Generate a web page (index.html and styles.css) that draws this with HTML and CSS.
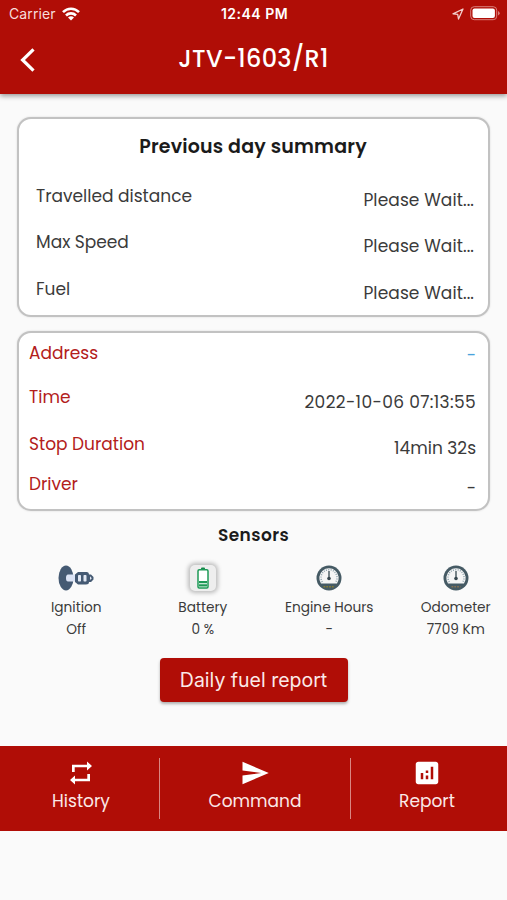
FILE: index.html
```
<!DOCTYPE html>
<html lang="en">
<head>
    <meta charset="UTF-8">
    <meta name="viewport" content="width=device-width, initial-scale=1.0">
    <title>JTV-1603/R1</title>
    <link rel="stylesheet" href="styles.css">
</head>
<body>
    <!-- Status bar and title -->
    <header class="header">
        <div class="status-bar">
            <div class="carrier">
                <span>Carrier</span>
                <svg class="wifi" viewBox="0 0 18 14" width="18" height="14" fill="none" stroke="#fff" stroke-width="2.6">
                    <path d="M1 5.2C5.5.6 12.5.6 17 5.2"/>
                    <path d="M4 8.5C6.8 5.7 11.2 5.7 14 8.5"/>
                    <path d="M6 10.5Q9 8 12 10.5L9 13.5Z" fill="#fff" stroke="none"/>
                </svg>
            </div>
            <div class="clock">12:44 PM</div>
            <div class="indicators">
                <svg viewBox="0 0 12 12" width="12" height="12" fill="none" stroke="#f3cfcd" stroke-width="1.3" stroke-linejoin="round">
                    <path d="M11 1L1 5.8L5.7 6.3L6.5 11Z"/>
                </svg>
                <svg viewBox="0 0 30 15" width="30" height="15">
                    <rect x="0.7" y="0.7" width="26" height="13" rx="3.5" fill="none" stroke="#d97f7b"/>
                    <rect x="2.5" y="2.5" width="22.4" height="9.4" rx="2" fill="#fff"/>
                    <path d="M28 5V9.5Q29.7 8.5 29.7 7.2T28 5Z" fill="#d97f7b"/>
                </svg>
            </div>
        </div>
        <div class="title-bar">
            <svg class="back" viewBox="0 0 15 24" width="15" height="24" fill="none" stroke="#fff" stroke-width="3.2">
                <path d="M13.5 1.3L2.6 12L13.5 22.7"/>
            </svg>
            <h1 class="title">JTV-1603/R1</h1>
        </div>
    </header>

    <main class="content">
        <!-- Previous day summary -->
        <section class="card summary">
            <h2 class="summary-title">Previous day summary</h2>
            <div class="row"><span>Travelled distance</span><span class="value">Please Wait...</span></div>
            <div class="row"><span>Max Speed</span><span class="value">Please Wait...</span></div>
            <div class="row"><span>Fuel</span><span class="value">Please Wait...</span></div>
        </section>

        <!-- Vehicle details -->
        <section class="card details">
            <div class="row address"><span class="label">Address</span><span class="link">-</span></div>
            <div class="row time"><span class="label">Time</span><span class="value date">2022-10-06 07:13:55</span></div>
            <div class="row stop"><span class="label">Stop Duration</span><span class="value">14min 32s</span></div>
            <div class="row driver"><span class="label">Driver</span><span class="value">-</span></div>
        </section>

        <!-- Sensors -->
        <h2 class="sensors-title">Sensors</h2>
        <div class="sensors">
            <div class="sensor">
                <svg viewBox="0 0 36 26" width="36" height="26">
                    <ellipse cx="8" cy="13" rx="7.5" ry="12.5" fill="#455a73"/>
                    <path d="M10 9.5H17V16.5H10Q8 16.5 8 13T10 9.5Z" fill="#dbe3f5"/>
                    <path d="M17 9.5L20 7H29Q31 7 31 9.5H33L35.5 12V14.5L33 17H31Q31 19.5 28 19.5H20L17 17Z" fill="#455a73"/>
                    <rect x="20" y="10" width="3" height="6.5" rx="0.7" fill="#e2e8f3"/>
                    <rect x="25.5" y="10" width="3" height="6.5" rx="0.7" fill="#e2e8f3"/>
                    <path d="M32 11.3L33.8 13.2L32 15Z" fill="#e2e8f3"/>
                </svg>
                <span class="name">Ignition</span>
                <span class="reading">Off</span>
            </div>
            <div class="sensor">
                <div class="battery">
                    <svg viewBox="0 0 12 22" width="12" height="22">
                        <rect x="4" y="0.5" width="4" height="2.5" rx="1" fill="#17874a"/>
                        <rect x="1" y="2.7" width="10" height="18.3" rx="1.2" fill="#fff" stroke="#1e9a57" stroke-width="1.5"/>
                        <path d="M2 14H10V16.3H2ZM2 17.2H10V19.5H2Z" fill="#1e9a57"/>
                    </svg>
                </div>
                <span class="name">Battery</span>
                <span class="reading">0 %</span>
            </div>
            <div class="sensor">
                <svg viewBox="0 0 26 26" width="26" height="26">
                    <circle cx="13" cy="13" r="12.5" fill="#455a64"/>
                    <path d="M5 18.5A9.7 9.7 0 1 1 21 18.5Z" fill="#f5f5f5"/>
                    <path d="M6.3 17A8 8 0 1 1 19.7 17" fill="none" stroke="#90a4ae" stroke-width="1.5" stroke-dasharray="1 1.3"/>
                    <path d="M13 6V13" stroke="#37474f" stroke-width="1.3"/>
                    <circle cx="13" cy="13.5" r="1.8" fill="#37474f"/>
                    <path d="M7.5 21.7H18.5" stroke="#847b35" stroke-width="1.6" stroke-dasharray="1.8 1"/>
                </svg>
                <span class="name">Engine Hours</span>
                <span class="reading">-</span>
            </div>
            <div class="sensor">
                <svg viewBox="0 0 26 26" width="26" height="26">
                    <circle cx="13" cy="13" r="12.5" fill="#455a64"/>
                    <path d="M5 18.5A9.7 9.7 0 1 1 21 18.5Z" fill="#f5f5f5"/>
                    <path d="M6.3 17A8 8 0 1 1 19.7 17" fill="none" stroke="#90a4ae" stroke-width="1.5" stroke-dasharray="1 1.3"/>
                    <path d="M13 6V13" stroke="#37474f" stroke-width="1.3"/>
                    <circle cx="13" cy="13.5" r="1.8" fill="#37474f"/>
                    <path d="M8.5 21.7H17.5" stroke="#847052" stroke-width="1.6" stroke-dasharray="1.8 1"/>
                </svg>
                <span class="name">Odometer</span>
                <span class="reading">7709 Km</span>
            </div>
        </div>

        <button class="fuel-btn">Daily fuel report</button>
    </main>

    <!-- Bottom navigation -->
    <nav class="nav">
        <a class="nav-item history">
            <svg viewBox="0 0 22 24" width="22" height="24" fill="#fff"><path d="M2 3.7H17V.5L22 5l-5 4.500V6.300H4.700V11H2zM20 20.300H5v3.200L0 19l5-4.500v3.200H17.300V13H20z"/></svg>
            <span>History</span>
        </a>
        <a class="nav-item command">
            <svg viewBox="0 0 24 24" width="30" height="30" fill="#fff"><path d="M2.01 21L23 12 2.01 3 2 10l15 2-15 2z"/></svg>
            <span>Command</span>
        </a>
        <a class="nav-item report">
            <svg viewBox="0 0 24 24" width="30" height="30" fill="#fff"><path d="M19 3H5c-1.1 0-2 .9-2 2v14c0 1.1.9 2 2 2h14c1.1 0 2-.9 2-2V5c0-1.1-.9-2-2-2zM9 17H7v-5h2v5zm4 0h-2v-3h2v3zm0-5h-2v-2h2v2zm4 5h-2V7h2v10z"/></svg>
            <span>Report</span>
        </a>
    </nav>
</body>
</html>
```
FILE: styles.css
```
* {
    box-sizing: border-box;
}
body {
    margin: 0;
    height: 900px;
    display: flex;
    flex-direction: column;
    overflow: hidden;
    background-color: #fafafa;
    color: #3b3b3b;
    font-family: Poppins, Inter, "Open Sans", sans-serif;
    font-size: 17px;
}
h1, h2 {
    margin: 0;
}
.header {
    flex: none;
    height: 94px;
    background-color: #b00d06;
    color: white;
    box-shadow: 0 2px 5px rgba(0, 0, 0, 0.4);
}
.status-bar {
    height: 27px;
    padding: 0 7px 0 9px;
    display: grid;
    grid-template-columns: 1fr auto 1fr;
    align-items: center;
    font-family: Inter, sans-serif;
    font-size: 14px;
}
.carrier {
    display: flex;
    align-items: center;
    gap: 6px;
    color: #f7dddc;
    letter-spacing: 0.1px;
}
.clock {
    font-size: 14px;
    font-weight: 600;
    letter-spacing: 0.5px;
}
.indicators {
    display: flex;
    align-items: center;
    justify-content: flex-end;
    gap: 6px;
}
.title-bar {
    height: 62px;
    padding: 0 20px;
    display: grid;
    grid-template-columns: 15px 1fr 15px;
    align-items: center;
}
.back {
    margin-top: 3px;
}
.title {
    text-align: center;
    font-size: 24px;
    font-weight: 500;
    letter-spacing: 0.3px;
}
.content {
    height: 652px;
    flex: none;
    padding: 23px 17px 0 17px;
    display: flex;
    flex-direction: column;
}
.card {
    border: 2px solid #c2c2c2;
    border-radius: 14px;
    background-color: white;
    box-shadow: 0 0 2px rgba(0, 0, 0, 0.15);
}
.row {
    display: flex;
    justify-content: space-between;
    line-height: 24px;
}
.summary {
    height: 200px;
    padding: 14px 14px 0 17px;
}
.summary-title {
    margin-bottom: 23px;
    padding-right: 4px;
    text-align: center;
    font-size: 19px;
    font-weight: 600;
    letter-spacing: 0.2px;
    line-height: 28px;
    color: #1b1b1b;
}
.summary .row {
    height: 46.3px;
}
.summary .value {
    letter-spacing: 0.1px;
}
.value {
    padding-top: 4px;
}
.details {
    height: 180px;
    margin-top: 14px;
    padding: 8px 12px 0 10px;
}
.label {
    color: #b3201b;
}
.link {
    color: #4aa3dc;
    padding-top: 2px;
}
.date {
    letter-spacing: 0.35px;
}
.address {
    height: 44px;
}
.time {
    height: 47px;
}
.time .value {
    padding-top: 5px;
}
.stop {
    height: 40px;
}
.sensors-title {
    margin-top: 11px;
    text-align: center;
    font-size: 17px;
    font-weight: 600;
    letter-spacing: 0.4px;
    line-height: 26px;
    color: #1b1b1b;
}
.sensors {
    margin: 14px -30px 0 -4px;
    display: grid;
    grid-template-columns: repeat(4, 126.5px);
}
.sensor {
    display: flex;
    flex-direction: column;
    align-items: center;
    font-size: 13.7px;
    line-height: 22px;
}
.sensor > svg, .battery {
    margin: 3px 0;
}
.name {
    margin-top: 3px;
}
.battery {
    width: 26px;
    height: 26px;
    display: flex;
    align-items: center;
    justify-content: center;
    border-radius: 5px;
    background-color: #eee;
    box-shadow: 0 0 4px 2px rgba(0, 0, 0, 0.25);
}
.fuel-btn {
    width: 188px;
    height: 44px;
    margin: 17px auto 0;
    padding: 0 0 1px;
    border: none;
    border-radius: 4px;
    background-color: #b00d06;
    color: #fbe9e8;
    font-family: Inter, sans-serif;
    font-size: 19.5px;
    box-shadow: 0 2px 3px rgba(0, 0, 0, 0.3);
}
.nav {
    flex: none;
    height: 85px;
    padding: 12px 0;
    display: grid;
    grid-template-columns: 160px 191px 1fr;
    background-color: #b00d06;
    color: #fbe9e8;
}
.nav-item {
    display: flex;
    flex-direction: column;
    align-items: center;
    line-height: 26px;
}
.history, .command {
    border-right: 1px solid #d98682;
}
.history {
    padding-left: 3px;
}
.history svg {
    margin: 3px 0;
}
.report {
    padding-right: 4px;
}
```
